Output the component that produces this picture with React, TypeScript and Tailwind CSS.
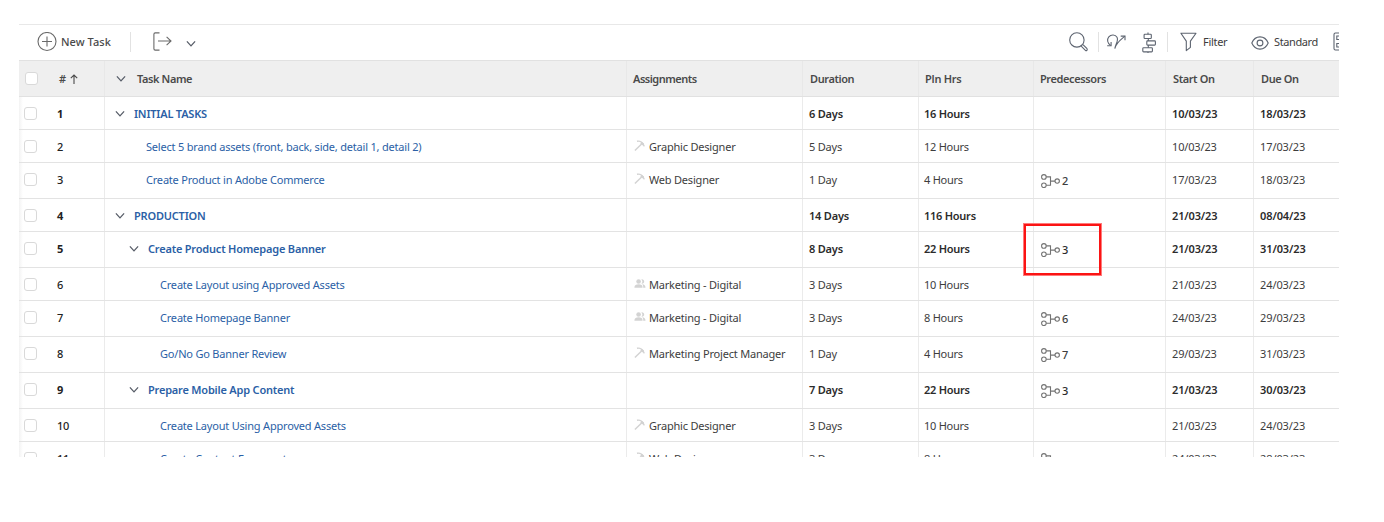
import type { ReactNode } from "react";

type Who = "role" | "team";

interface Task {
  n: number;
  name: string;
  indent: string;
  height: string;
  group?: boolean;
  who?: [Who, string];
  duration: string;
  hours: string;
  pred?: string;
  marked?: boolean;
  start: string;
  due: string;
}

const TASKS: Task[] = [
  { n: 1, name: "INITIAL TASKS", indent: "pl-[10px]", height: "h-[33px]", group: true, duration: "6 Days", hours: "16 Hours", start: "10/03/23", due: "18/03/23" },
  { n: 2, name: "Select 5 brand assets (front, back, side, detail 1, detail 2)", indent: "pl-[41px]", height: "h-[33px]", who: ["role", "Graphic Designer"], duration: "5 Days", hours: "12 Hours", start: "10/03/23", due: "17/03/23" },
  { n: 3, name: "Create Product in Adobe Commerce", indent: "pl-[41px]", height: "h-[36px]", who: ["role", "Web Designer"], duration: "1 Day", hours: "4 Hours", pred: "2", start: "17/03/23", due: "18/03/23" },
  { n: 4, name: "PRODUCTION", indent: "pl-[10px]", height: "h-[33px]", group: true, duration: "14 Days", hours: "116 Hours", start: "21/03/23", due: "08/04/23" },
  { n: 5, name: "Create Product Homepage Banner", indent: "pl-[24px]", height: "h-[36px]", group: true, duration: "8 Days", hours: "22 Hours", pred: "3", marked: true, start: "21/03/23", due: "31/03/23" },
  { n: 6, name: "Create Layout using Approved Assets", indent: "pl-[55px]", height: "h-[33px]", who: ["team", "Marketing - Digital"], duration: "3 Days", hours: "10 Hours", start: "21/03/23", due: "24/03/23" },
  { n: 7, name: "Create Homepage Banner", indent: "pl-[55px]", height: "h-[36px]", who: ["team", "Marketing - Digital"], duration: "3 Days", hours: "8 Hours", pred: "6", start: "24/03/23", due: "29/03/23" },
  { n: 8, name: "Go/No Go Banner Review", indent: "pl-[55px]", height: "h-[36px]", who: ["role", "Marketing Project Manager"], duration: "1 Day", hours: "4 Hours", pred: "7", start: "29/03/23", due: "31/03/23" },
  { n: 9, name: "Prepare Mobile App Content", indent: "pl-[24px]", height: "h-[36px]", group: true, duration: "7 Days", hours: "22 Hours", pred: "3", start: "21/03/23", due: "30/03/23" },
  { n: 10, name: "Create Layout Using Approved Assets", indent: "pl-[55px]", height: "h-[33px]", who: ["role", "Graphic Designer"], duration: "3 Days", hours: "10 Hours", start: "21/03/23", due: "24/03/23" },
  { n: 11, name: "Create Content Fragment", indent: "pl-[55px]", height: "h-[36px]", who: ["role", "Web Designer"], duration: "3 Days", hours: "8 Hours", pred: "", start: "24/03/23", due: "28/03/23" },
];

const COLS = "grid shrink-0 grid-cols-[86px_522px_176px_116px_115px_132px_88px_85px]";

function Caret({ className = "" }: { className?: string }) {
  return (
    <svg className={`shrink-0 ${className}`} width="10" height="8" viewBox="0 0 10 8" fill="none" stroke="#555b66" strokeWidth="1.25">
      <path d="M0.9 1.4 5 5.9 9.1 1.4" />
    </svg>
  );
}

function Checkbox() {
  return <span className="size-[13px] shrink-0 rounded-[3px] border border-[#d9d9d9] bg-white" />;
}

function RoleIcon() {
  return (
    <svg className="shrink-0" width="12" height="12" viewBox="0 0 12 12" fill="none" stroke="#d2d2d2">
      <path d="M0.9 10.6 7.6 4" strokeWidth="1.4" />
      <path d="M3 1.3C6.2 0.6 9.2 2.8 10.2 6.4" strokeWidth="1.5" />
      <path d="M7 2.4 9.4 4.6" strokeWidth="2.2" />
    </svg>
  );
}

function TeamIcon() {
  return (
    <svg className="shrink-0" width="12" height="12" viewBox="0 0 12 12" fill="#d3d3d3">
      <circle cx="4.6" cy="3.5" r="2.3" />
      <path d="M0.4 9.7C0.4 7.3 2.1 6.3 4.6 6.3S8.6 7.3 8.6 9.7Z" />
      <path d="M7.3 1.4A2.2 2.2 0 1 1 7.4 5.6 3 3 0 0 0 7.3 1.4ZM9.2 9.7H11.5C11.5 7.6 10.3 6.5 8.2 6.3 9 7.2 9.3 8.2 9.2 9.7Z" />
    </svg>
  );
}

function LinkIcon() {
  return (
    <svg className="shrink-0" width="20" height="14" viewBox="0 0 20 14" fill="none" stroke="#737373" strokeWidth="1.1">
      <circle cx="2.9" cy="2.9" r="2.3" />
      <circle cx="2.9" cy="11.3" r="2.3" />
      <circle cx="16.2" cy="7.1" r="2.2" />
      <path d="M5.2 2.9H9.5V11.3H5.2M9.5 7.1H14" />
    </svg>
  );
}

function Divider({ className = "" }: { className?: string }) {
  return <span className={`h-5 w-px shrink-0 bg-[#e2e2e2] ${className}`} />;
}

function Toolbar() {
  return (
    <div className="flex h-9 shrink-0 items-center border-t border-[#e8e8e8] bg-white pb-[2px] text-[#4a4a4a]">
      <svg className="ml-[18px] shrink-0" width="20" height="20" viewBox="0 0 20 20" fill="none" stroke="#6a6a6a" strokeWidth="1.1">
        <circle cx="10" cy="9.5" r="9" />
        <path d="M10 4.5V14.5M5 9.5H15" />
      </svg>
      <span className="ml-[4px] w-[50px] font-medium tracking-[0.05px] whitespace-nowrap">New Task</span>
      <Divider className="ml-[19px]" />
      <svg className="ml-[22px] shrink-0" width="20" height="20" viewBox="0 0 20 20" fill="none" stroke="#6a6a6a" strokeWidth="1.1">
        <path d="M6.5 0.9H2.2Q0.9 0.9 0.9 2.2V16.8Q0.9 18.1 2.2 18.1H6.5M5 9H18M13.6 4.9 18 9 13.6 13.1" />
      </svg>
      <Caret className="mt-[4px] ml-[13px]" />

      <svg className="mr-[9px] ml-auto shrink-0" width="20" height="20" viewBox="0 0 20 20" fill="none" stroke="#5d6470" strokeWidth="1.1">
        <circle cx="7.9" cy="7.9" r="7.2" />
        <path d="M12.2 14.1 16.4 18.3Q17.2 19 17.9 18.3T18 16.7L14 12.7" />
      </svg>
      <Divider />
      <svg className="ml-[7px] shrink-0" width="20" height="20" viewBox="0 0 20 20" fill="none" stroke="#5d6470" strokeWidth="1.1">
        <path d="M4.6 13.4C1.2 11.2 0.8 7.4 2.8 4.9 5 2.2 9.4 2.4 11 5.2 12.8 8.4 9.8 11.6 8.8 16.6 9.8 11.2 14.2 8 18.8 4.2" />
        <path d="M1.2 13.8H5.1V9.9M14.7 4.1H19V8.2" />
      </svg>
      <svg className="ml-[16px] shrink-0" width="14" height="22" viewBox="0 0 14 22" fill="none" stroke="#5d6470" strokeWidth="1.1">
        <rect x="2.1" y="3.3" width="7.2" height="4.2" rx="0.8" />
        <rect x="4.8" y="9.9" width="8.6" height="4.2" rx="0.8" />
        <rect x="0.8" y="16.7" width="9.6" height="4.2" rx="0.8" />
        <path d="M6 1.6V3.3M6.3 7.5V9.9M6.3 14.1V16.7M6 20.9V22" />
      </svg>
      <Divider className="ml-[11px]" />
      <svg className="ml-[12px] shrink-0" width="18" height="20" viewBox="0 0 18 20" fill="none" stroke="#5d6470" strokeWidth="1.1" strokeLinejoin="round">
        <path d="M0.9 1.2H16L10.4 9.1V15.4L6.3 18.6V9.1Z" />
      </svg>
      <span className="ml-[5px] w-[26px] tracking-[-0.3px] text-[#3c3c3c]">Filter</span>
      <svg className="mt-[2px] ml-[22px] shrink-0" width="18" height="14" viewBox="0 0 18 14" fill="none" stroke="#5d6470" strokeWidth="1.1">
        <path d="M0.8 7C2.5 3.1 5.5 0.9 9 0.9S15.5 3.1 17.2 7C15.5 10.9 12.5 13.1 9 13.1S2.5 10.9 0.8 7Z" />
        <circle cx="9" cy="7" r="2.9" />
      </svg>
      <span className="ml-[5px] w-[45px] tracking-[-0.4px] whitespace-nowrap text-[#3c3c3c]">Standard</span>
      <svg className="ml-[14px] shrink-0" width="6" height="20" viewBox="0 0 6 20" fill="none" stroke="#5d6470" strokeWidth="1.1">
        <path d="M6 1H2.4Q1 1 1 2.4V16.6Q1 18 2.4 18H6M6 4H3.8V7.5H6M6 11.5H3.8V15H6" />
      </svg>
    </div>
  );
}

function HeadCell({ children, last, className }: { children?: ReactNode; last?: boolean; className: string }) {
  return (
    <div className={`flex h-full items-center ${last ? "" : "border-r border-[#e8e8e8]"} ${className}`}>{children}</div>
  );
}

function Header() {
  return (
    <div className={`${COLS} h-[37px] border-t border-b border-[#e1e1e1] bg-[#efefef] font-semibold tracking-[-0.25px] text-[#4a4a4a]`}>
      <HeadCell className="pl-[6px]">
        <Checkbox />
        <span className="ml-[21px]">#</span>
        <svg className="ml-[4px]" width="8" height="10" viewBox="0 0 8 10" fill="none" stroke="#4a4a4a" strokeWidth="1.1">
          <path d="M4 10V1M0.8 4.2 4 1 7.2 4.2" />
        </svg>
      </HeadCell>
      <HeadCell className="pl-[11px]">
        <Caret />
        <span className="ml-[11px] tracking-[-0.4px]">Task Name</span>
      </HeadCell>
      <HeadCell className="pl-[6px] tracking-[-0.5px]">Assignments</HeadCell>
      <HeadCell className="pl-[7px] tracking-[-0.4px]">Duration</HeadCell>
      <HeadCell className="pl-[6px]">Pln Hrs</HeadCell>
      <HeadCell className="pl-[6px] tracking-[-0.4px]">Predecessors</HeadCell>
      <HeadCell className="pl-[7px] tracking-[-0.4px]">Start On</HeadCell>
      <HeadCell className="pl-[7px] tracking-[-0.4px]" last>Due On</HeadCell>
    </div>
  );
}

function Cell({ children, last, className = "" }: { children?: ReactNode; last?: boolean; className?: string }) {
  return (
    <div className={`flex h-full items-start pt-[9px] ${last ? "" : "border-r border-[#ebebeb]"} ${className}`}>
      <div className="flex h-4 items-center">{children}</div>
    </div>
  );
}

function TaskRow({ task }: { task: Task }) {
  return (
    <div className={`${COLS} ${task.height} border-b border-[#e3e3e3] ${task.group ? "font-semibold text-[#2b2b2b]" : "text-[#3d3d3d]"}`}>
      <Cell className="bg-linear-to-r from-[#f3f3f3] to-white to-[4px] pl-[5px]">
        <span className="-mt-[2px] flex"><Checkbox /></span>
        <span className={`ml-[20px] text-[#222222] ${task.group ? "font-bold" : "font-medium"}`}>{task.n}</span>
      </Cell>
      <Cell className={task.indent}>
        {task.group && <Caret className="mr-[9px]" />}
        <span className="text-[#2b5fa6]">{task.name}</span>
      </Cell>
      <Cell className="pl-[7px]">
        {task.who && (
          <>
            <span className="-mt-[2px] mr-[3px] flex">{task.who[0] === "role" ? <RoleIcon /> : <TeamIcon />}</span>
            {task.who[1]}
          </>
        )}
      </Cell>
      <Cell className="pl-[6px]">{task.duration}</Cell>
      <Cell className="pl-[5px] tracking-[-0.25px]">{task.hours}</Cell>
      <Cell className="relative pl-[7px]">
        {task.pred !== undefined && (
          <>
            <span className="mt-[2px] flex"><LinkIcon /></span>
            <span className="mt-[2px] ml-[1px] font-medium">{task.pred}</span>
          </>
        )}
        {task.marked && <span className="absolute -top-[8px] -left-[10px] h-[51px] w-[77px] border-2 border-[#fb1414] outline-1 outline-[#ff7a7a]" />}
      </Cell>
      <Cell className="pl-[6px] tracking-[-0.15px]">{task.start}</Cell>
      <Cell className="pl-[6px] tracking-[-0.1px]" last>{task.due}</Cell>
    </div>
  );
}

export default function App() {
  return (
    <div className="h-[522px] w-[1384px] overflow-hidden bg-white pt-6 pl-[19px] font-['Noto_Sans',sans-serif] text-[11px] leading-4 tracking-[-0.2px]">
      <div className="flex h-[433px] w-[1320px] flex-col overflow-hidden">
        <Toolbar />
        <Header />
        {TASKS.map((task) => (
          <TaskRow key={task.n} task={task} />
        ))}
      </div>
    </div>
  );
}
